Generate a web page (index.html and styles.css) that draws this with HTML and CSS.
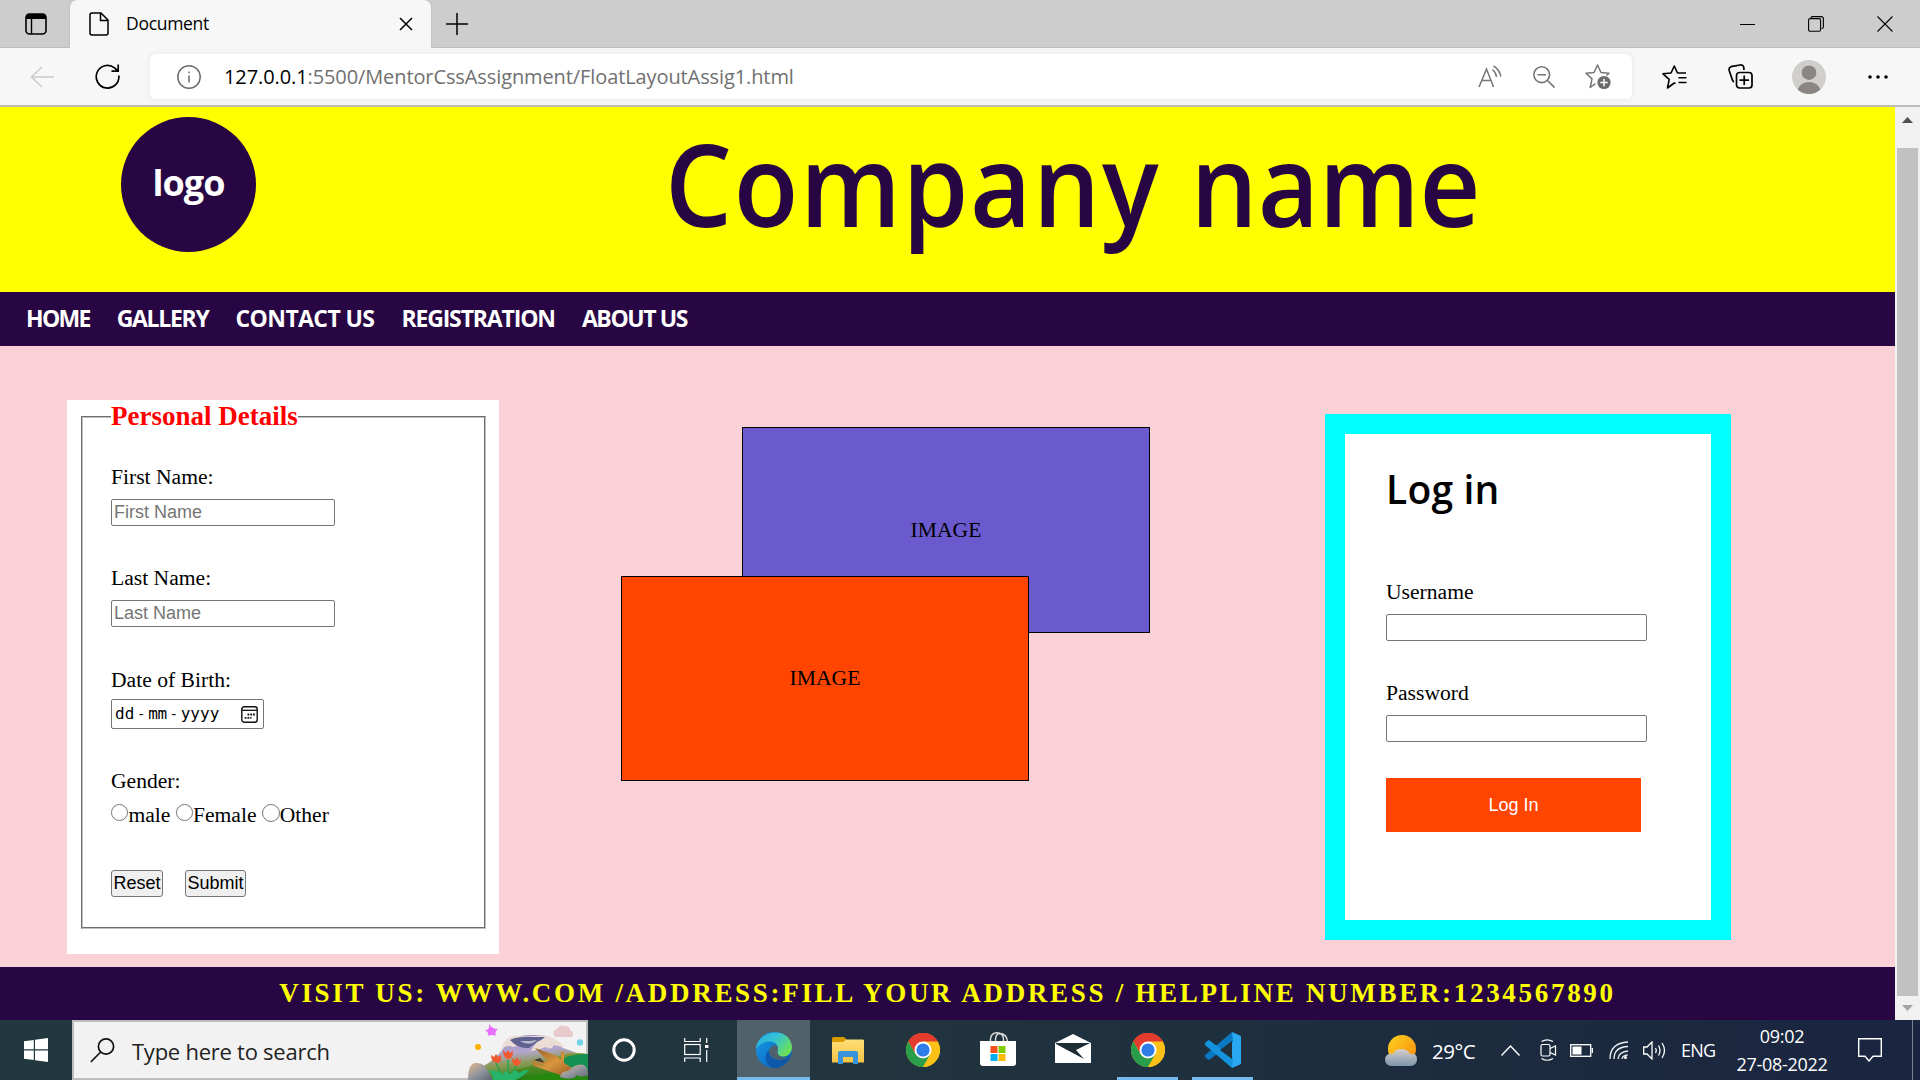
FILE: index.html
```html
<!DOCTYPE html>
<html lang="en">
<head>
<meta charset="utf-8">
<title>Document</title>
<link rel="stylesheet" href="styles.css">
</head>
<body>
<svg width="0" height="0" class="defs" aria-hidden="true">
  <defs>
    <linearGradient id="edgeBlue" x1="0" y1="0" x2="1" y2="1"><stop offset="0" stop-color="#1b9de2"/><stop offset=".5" stop-color="#0f7ad0"/><stop offset="1" stop-color="#0c4f9e"/></linearGradient>
    <linearGradient id="edgeGreen" x1="0" y1="0" x2="1" y2=".6"><stop offset="0" stop-color="#2aa9e0"/><stop offset=".5" stop-color="#33c3d4"/><stop offset="1" stop-color="#6be05a"/></linearGradient>
    <linearGradient id="sun" x1="0" y1="0" x2="1" y2="1"><stop offset="0" stop-color="#ffd21e"/><stop offset="1" stop-color="#f68a0c"/></linearGradient>
    <linearGradient id="cloud" x1="0" y1="0" x2="0" y2="1"><stop offset="0" stop-color="#d9cfc8"/><stop offset="1" stop-color="#7b95ac"/></linearGradient>
    <linearGradient id="folder" x1="0" y1="0" x2="0" y2="1"><stop offset="0" stop-color="#ffde79"/><stop offset="1" stop-color="#f8c344"/></linearGradient>
    <linearGradient id="hill" x1="0" y1="0" x2=".25" y2="1"><stop offset="0" stop-color="#8d86ae"/><stop offset=".45" stop-color="#b3a6cf"/><stop offset=".7" stop-color="#8a9a55"/><stop offset="1" stop-color="#2f8a1c"/></linearGradient>
    <linearGradient id="grass" x1="0" y1="0" x2="0" y2="1"><stop offset="0" stop-color="#8b9a3c"/><stop offset="1" stop-color="#1f7d12"/></linearGradient>
    <linearGradient id="log" x1="0" y1="0" x2="1" y2="1"><stop offset="0" stop-color="#8f5a22"/><stop offset=".5" stop-color="#d9963f"/><stop offset="1" stop-color="#8a531c"/></linearGradient>
    <linearGradient id="rock" x1="0" y1="0" x2="1" y2="1"><stop offset="0" stop-color="#e6b98a"/><stop offset=".5" stop-color="#94979f"/><stop offset="1" stop-color="#5d6470"/></linearGradient>
    <symbol id="chrome" viewBox="0 0 34 34">
      <circle cx="17" cy="17" r="17" fill="#fbc116"/>
      <path d="M17 17L2.3 8.5A17 17 0 0 1 31.7 8.5z" fill="#e33b2e"/>
      <path d="M17 8.5H31.7A17 17 0 0 0 2.3 8.5L9.6 21.2z" fill="#e33b2e"/>
      <path d="M2.3 8.5A17 17 0 0 0 17 34L24.4 21.2L9.6 21.2z" fill="#2a9d4a"/>
      <path d="M31.7 8.5H17L24.4 21.2L17 34A17 17 0 0 0 31.7 8.5z" fill="#fbc116"/>
      <circle cx="17" cy="17" r="8.5" fill="#fff"/><circle cx="17" cy="17" r="6.6" fill="#2f7de9"/>
    </symbol>
  </defs>
</svg>

<div class="tabstrip">
  <div class="tab-actions">
    <svg width="22" height="22" viewBox="0 0 22 22"><rect x="1" y="1" width="20" height="20" rx="3.5" fill="none" stroke="#000" stroke-width="1.6"/><path d="M1 6V4Q1 1 4 1H18Q21 1 21 4V6z"/><path d="M6.5 5V21" stroke="#000" stroke-width="1.4"/></svg>
  </div>
  <div class="tab">
    <svg width="20" height="24" viewBox="0 0 20 24" fill="none" stroke="#000" stroke-width="1.5"><path d="M1 3Q1 1 3 1H12L19 8V21Q19 23 17 23H3Q1 23 1 21zM11.500 1V8.500H19"/></svg>
    <span class="tab-title">Document</span>
    <svg class="tab-close" width="14" height="14" viewBox="0 0 14 14" stroke="#000" stroke-width="1.5"><path d="M1 1L13 13M13 1L1 13"/></svg>
  </div>
  <svg class="new-tab" width="22" height="22" viewBox="0 0 22 22" stroke="#000" stroke-width="1.5"><path d="M11 0V22M0 11H22"/></svg>
  <div class="window-buttons">
    <svg width="15" height="16" viewBox="0 0 15 16"><path d="M0 8.500H15" stroke="#000"/></svg>
    <svg width="16" height="16" viewBox="0 0 16 16" fill="none" stroke="#000" stroke-width="1.100"><rect x=".6" y="2.600" width="12" height="12.600" rx="1.500"/><path d="M3 2.500V2Q3 .6 4.500 .6H13Q15.400 .6 15.400 3V11Q15.400 12.500 13.500 12.500"/></svg>
    <svg width="16" height="16" viewBox="0 0 16 16" stroke="#000" stroke-width="1.100"><path d="M.5 .5L15.500 15.500M15.500 .5L.5 15.500"/></svg>
  </div>
</div>

<div class="toolbar">
  <svg class="back" width="24" height="22" viewBox="0 0 24 22" fill="none" stroke="#cbcbcb" stroke-width="1.500"><path d="M24 11H1M12 1L1.500 11L12 21"/></svg>
  <svg class="reload" width="25" height="25" viewBox="0 0 25 25" fill="none" stroke="#000" stroke-width="1.700"><path d="M23.800 11.500A11.300 11.300 0 1 1 19.500 3.800L23 7M23.200 .5V7.200H16.500"/></svg>
  <div class="address">
    <svg width="24" height="24" viewBox="0 0 24 24" fill="none" stroke="#6b6b6b" stroke-width="1.500"><circle cx="12" cy="12" r="11.200"/><path d="M12 10.500V17.500M12 6.500V8.300"/></svg>
    <span class="url"><b>127.0.0.1</b>:5500/MentorCssAssignment/FloatLayoutAssig1.html</span>
    <svg class="read" width="24" height="24" viewBox="0 0 24 24" fill="none" stroke="#767676" stroke-width="1.500"><path d="M1 22L8.500 4L15.500 22M3.700 15.500H13M14.500 4.500Q18 7.500 18.500 12M15.500 1Q21.500 4.500 22.800 11.500"/></svg>
    <svg class="zoom-out" width="22" height="22" viewBox="0 0 22 22" fill="none" stroke="#767676" stroke-width="1.600"><circle cx="8.700" cy="8.700" r="7.900"/><path d="M4.500 8.700H13M14.300 14.300L21.500 21.500"/></svg>
    <svg class="fav" width="26" height="26" viewBox="0 0 26 26"><path d="M10.500 19.700L5.200 23.500L7 14.900L1 9.300L9 8.500L12.500 1L16 8.500L24 9.300L21.500 11.500" fill="none" stroke="#767676" stroke-width="1.500" stroke-linejoin="round"/><circle cx="19" cy="18.500" r="6.600" fill="#6b6b6b"/><path d="M19 14.800V22.200M15.300 18.500H22.700" stroke="#fff" stroke-width="1.500"/></svg>
  </div>
  <svg class="favorites" width="25" height="24" viewBox="0 0 25 24" fill="none" stroke="#000" stroke-width="1.600" stroke-linejoin="round"><path d="M13.500 18.500L12.300 18L5.500 23L7.200 14.300L1 8.800L9 8L12.300 1L15.500 8H24M16.500 12.800H24.500M16.500 17.500H24.500"/></svg>
  <svg class="collections" width="25" height="25" viewBox="0 0 25 25" fill="none" stroke="#000" stroke-width="1.700"><path d="M6 18Q4.500 17 4.100 15L1.200 6.500Q.5 3.500 3 2.700L12 1Q15 .5 15.700 3L16 6"/><rect x="8.500" y="8.500" width="15.500" height="15.500" rx="3"/><path d="M16.200 11.500V21M11.500 16.200H21"/></svg>
  <svg class="avatar" width="34" height="34" viewBox="0 0 34 34"><clipPath id="av"><circle cx="17" cy="17" r="17"/></clipPath><g clip-path="url(#av)"><rect width="34" height="34" fill="#d0cfcc"/><circle cx="17" cy="12.700" r="7.300" fill="#8b8683"/><path d="M5 34C5 18 29 18 29 34z" fill="#8b8683"/></g></svg>
  <svg class="more" width="20" height="4" viewBox="0 0 20 4"><circle cx="2" cy="2" r="1.800"/><circle cx="10" cy="2" r="1.800"/><circle cx="18" cy="2" r="1.800"/></svg>
</div>

<div class="viewport">
  <div class="page">
    <header class="header">
      <div class="logo">logo</div>
      <h1 class="company"><span>Company</span><span class="second">name</span></h1>
    </header>
    <nav class="nav">
      <a class="n1">HOME</a><a class="n2">GALLERY</a><a class="n3">CONTACT US</a><a class="n4">REGISTRATION</a><a class="n5">ABOUT US</a>
    </nav>
    <main class="main">
      <form class="details">
        <fieldset class="fields">
          <legend>Personal Details</legend>
          <div class="row"><label>First Name:</label><input class="text" placeholder="First Name"></div>
          <div class="row"><label>Last Name:</label><input class="text" placeholder="Last Name"></div>
          <div class="row dob"><label>Date of Birth:</label>
            <div class="date"><span>dd</span><i>-</i><span class="mm">mm</span><i>-</i><span>yyyy</span>
              <svg width="17" height="17" viewBox="0 0 17 17"><rect x=".8" y=".8" width="15.400" height="15.400" rx="2.500" fill="none" stroke="#111" stroke-width="1.400"/><path d="M1 4.300H16" stroke="#111" stroke-width="1.300"/><path d="M6.500 8.500H14M3.700 11.800H10.500" stroke="#111" stroke-width="1.800" stroke-dasharray="1.800 1"/></svg>
            </div>
          </div>
          <div class="row"><label>Gender:</label>
            <div class="radios"><i class="radio"></i><span class="r1">male</span><i class="radio"></i><span class="r2">Female</span><i class="radio big"></i><span>Other</span></div>
          </div>
          <div class="buttons"><button type="button" class="reset">Reset</button><button type="button" class="submit">Submit</button></div>
        </fieldset>
      </form>
      <div class="images">
        <div class="image back-image">IMAGE</div>
        <div class="image front-image">IMAGE</div>
      </div>
      <form class="login">
        <h2>Log in</h2>
        <div class="row"><label>Username</label><input class="text"></div>
        <div class="row"><label>Password</label><input class="text"></div>
        <button type="button" class="login-button">Log In</button>
      </form>
    </main>
    <footer class="footer">VISIT US: WWW.COM /ADDRESS:FILL YOUR ADDRESS / HELPLINE NUMBER:1234567890</footer>
  </div>
  <div class="scrollbar">
    <svg width="11" height="6" viewBox="0 0 11 6"><path d="M0 6L5.500 0L11 6z" fill="#505050"/></svg>
    <div class="thumb"></div>
    <svg width="11" height="6" viewBox="0 0 11 6"><path d="M0 0L5.500 6L11 0z" fill="#a3a3a3"/></svg>
  </div>
</div>

<div class="taskbar">
  <div class="start"><svg width="24" height="24" viewBox="0 0 24 24" fill="#fff"><path d="M0 3.300L9.800 2V11.300H0zM11 1.800L24 0V11.300H11zM0 12.500H9.800V22L0 20.700zM11 12.500H24V24L11 22.200z"/></svg></div>
  <div class="search">
    <svg class="glass" width="25" height="25" viewBox="0 0 25 25" fill="none" stroke="#111" stroke-width="1.700"><circle cx="16" cy="8.500" r="7.600"/><path d="M10.700 14L.8 24"/></svg>
    <span>Type here to search</span>
    <svg class="art" width="120" height="60" viewBox="0 0 120 60">
      <path d="M0 60Q14 46 22 42Q34 32 38 24Q42 15 52 16Q66 14 79 16Q88 22 95 28L120 37V60z" fill="url(#hill)"/>
      <path d="M33 29Q37 17 46 15.500Q57 17 67 16Q77 14 83 17Q93 22 97 27Q88 26 86 25Q83 31 78 27Q70 30 63 31Q66 25 69 22L57 20L48 22Q51 27 45 27Q40 24 33 29z" fill="#ecdcd6"/>
      <path d="M42 20Q47 17 57 17L77 17Q74 20 69 22L61 28Q50 29 42 20z" fill="#5f628e"/><path d="M52 21Q62 27 69 20L62 21z" fill="#b9b9c9"/>
      <path d="M20 60Q55 46 77 43Q97 30 120 34V60z" fill="url(#grass)"/>
      <path d="M88 43Q101 33 120 34V51L94 51z" fill="#129152"/><path d="M53 60Q87 48 120 55V60z" fill="#26870f"/>
      <path d="M67 28L89 36L93 40V34Q92 31 96 31V43L111 52Q104 57 95 56L66 46L63 40L78 47L65 39L80 41z" fill="url(#log)"/><path d="M66 40L77 43L72 38z" fill="#3b3c36"/>
      <path d="M0 60Q0 44 7 43Q15 42 19 49L25 60z" fill="url(#rock)"/>
      <path d="M92 57Q93 51 100 51Q108 43 116 45Q120 47 120 55Q113 58 109 55Q106 60 96 58z" fill="url(#rock)"/>
      <path d="M28 43L33 54M40 40V58M48 46L43 57" stroke="#26a650" stroke-width="1.500" fill="none"/>
      <path d="M20 51Q30 49 35 55Q37 48 42 54Q47 48 51 53Q58 49 61 50Q55 57 47 60H24Q27 55 20 51z" fill="#25b46a"/>
      <path d="M23 35L26 37L28 34L30 37L33 35Q34 43 29 43Q23 42 23 35zM35 30L38 33L40 30L42 33L45 31Q45 39 40 39Q35 38 35 30zM44 38L47 40L49 37L51 41L53 39Q53 46 48 46Q44 45 44 38z" fill="#f15a31"/>
      <path d="M21 4Q24 9 30 9Q26 12 28 16Q23 14 20 16Q21 12 17 10Q22 10 21 4z" fill="#e86fff"/>
      <circle cx="10" cy="27" r="3" fill="#ffb000"/><circle cx="112" cy="22.500" r="3.200" fill="#72d3e8"/>
      <path d="M87 17Q83 11 89 9Q92 4 97 6Q102 6 102 10Q107 12 104 17z" fill="#e9c9cc"/>
    </svg>
  </div>
  <div class="cell cortana"><svg width="24" height="24" viewBox="0 0 24 24"><circle cx="12" cy="12" r="10.200" fill="none" stroke="#fff" stroke-width="3"/></svg></div>
  <div class="cell taskview"><svg width="25" height="24" viewBox="0 0 25 24" fill="none" stroke="#fff" stroke-width="1.200"><rect x=".7" y="6.500" width="15.500" height="10"/><path d="M.7 0V3.500H16.200V0M.7 24V20H16.200V24M22.700 0V5M22.700 12V24"/><rect x="21" y="7" width="3.400" height="3" fill="#fff" stroke="none"/></svg></div>
  <div class="cell app active"><svg width="36" height="36" viewBox="0 0 36 36"><circle cx="18" cy="18" r="18" fill="url(#edgeBlue)"/><path d="M0 17C1-2 34-7 36 15C36 23 29 26 24 24Q20 22 22 18C23 7 6 7 0 17z" fill="url(#edgeGreen)"/><path d="M13 18Q15 14 18.500 13C25 15 20 19 22 22Q26 28 34 24.500C27 30 13 29 13 18z" fill="#4f616b"/><path d="M13 18C12 29 26 31 34 24.500Q28 35 19 36C9 34 7 23 13 18z" fill="#0d58a8"/></svg></div>
  <div class="cell app"><svg width="32" height="27" viewBox="0 0 32 27"><path d="M0 1.500Q0 0 1.500 0H12L15 3V8H0z" fill="#d99a00"/><path d="M0 5H11L14 2.500H31Q32 2.500 32 4V25.500H0z" fill="url(#folder)"/><path d="M6 27V16Q6 14 8 14H24Q26 14 26 16V27H21V20H11V27z" fill="#3793dd"/></svg></div>
  <div class="cell app"><svg width="34" height="34"><use href="#chrome"/></svg></div>
  <div class="cell app store"><svg width="36" height="35" viewBox="0 0 36 35"><path d="M10.500 10V7Q11 .7 17 .7Q23 .7 23.500 7V10M15.500 10V7Q16 1.500 20 1.500Q27 2 27.500 10" fill="none" stroke="#ddd" stroke-width="1.400"/><path d="M0 9H36V31Q36 34 33 34H3Q0 34 0 31z" fill="#fff"/><path d="M10.500 14H17.500V21H10.500z" fill="#f1511b"/><path d="M18.500 14H25.500V21H18.500z" fill="#80cc00"/><path d="M10.500 22H17.500V29H10.500z" fill="#00adef"/><path d="M18.500 22H25.500V29H18.500z" fill="#fbbc09"/></svg></div>
  <div class="cell app mail"><svg width="36" height="30" viewBox="0 0 36 30"><path d="M0 9L18 0L36 9V29H0z" fill="#fff"/><path d="M1 9H35L21 16L29 25L1 10z" fill="#1d2c34"/></svg></div>
  <div class="cell app running"><svg width="34" height="34"><use href="#chrome"/></svg></div>
  <div class="cell app running"><svg width="36" height="36" viewBox="0 0 36 36"><path d="M27 0L36 4V32L27 36z" fill="#2aa9f3"/><path d="M27 0L28 10L4 28Q3 28 0 25V23z" fill="#0a78c2"/><path d="M27 36L28 26L4 8Q3 8 0 11V13z" fill="#1592de"/><path d="M27 9V27L15 18z" fill="#1f2f3b"/></svg></div>
  <div class="tray">
    <svg class="weather" width="32" height="31" viewBox="0 0 32 31"><circle cx="17" cy="14" r="14" fill="url(#sun)"/><path d="M6 31Q0 30 0 24Q1 18 8 19Q10 14 16 14Q23 14 25 19Q32 18 32 24Q32 30 26 31z" fill="url(#cloud)"/></svg>
    <span class="temp">29°C</span>
    <svg class="chev" width="19" height="11" viewBox="0 0 19 11" fill="none" stroke="#fff" stroke-width="1.400"><path d="M.5 10.500L9.500 1L18.500 10.500"/></svg>
    <svg class="cam" width="17" height="22" viewBox="0 0 17 22" fill="none" stroke="#fff" stroke-width="1.200"><rect x="1" y="5.500" width="9" height="11.500" rx="1.500"/><path d="M10 9.500L15.500 7V16L10 13.500M1.500 2.500Q7 -.8 13 2.500M1.500 19.500Q7 23 13 19.500"/></svg>
    <svg class="battery" width="23" height="13" viewBox="0 0 23 13" fill="none" stroke="#fff" stroke-width="1.300"><rect x=".7" y=".7" width="20" height="11.600"/><path d="M22.300 4V9"/><rect x="2.500" y="2.500" width="9" height="8" fill="#fff" stroke="none"/></svg>
    <svg class="wifi" width="20" height="19" viewBox="0 0 20 19" fill="none" stroke="#e8edf0" stroke-width="1.300"><path d="M1 18Q1 2 19 1M5 18Q5 6 19 5.500M9 18Q9.500 11 19 10M13 18Q13.500 14.500 18.500 14"/><circle cx="16.500" cy="16.500" r="1.500" fill="#fff" stroke="none"/></svg>
    <svg class="sound" width="23" height="19" viewBox="0 0 23 19" fill="none" stroke="#fff" stroke-width="1.300"><path d="M.7 6H4L9 1V18L4 13H.7zM12.500 7Q14 9.500 12.500 12M15.500 4.500Q18.500 9.500 15.500 14.500M19 2Q24 9.500 19 17"/></svg>
    <span class="lang">ENG</span>
    <div class="clock"><span>09:02</span><span class="day">27-08-2022</span></div>
    <svg class="note" width="24" height="24" viewBox="0 0 24 24" fill="none" stroke="#fff" stroke-width="1.400"><path d="M.7 .7H23.300V18.300H15L11 23L7 18.300H.7z"/></svg>
    <div class="peek"></div>
  </div>
</div>
</body>
</html>
```
FILE: styles.css
```css
* { box-sizing: border-box; }
body { margin: 0; width: 1920px; height: 1080px; overflow: hidden; font-family: "Liberation Serif", "Times New Roman", serif; font-size: 21.6px; color: #000; display: flex; flex-direction: column; }
svg { display: block; flex: none; }
.defs { position: absolute; }
i { font-style: normal; }

/* browser tabs */
.tabstrip { height: 48px; flex: none; background: #cdcdcd; display: flex; align-items: center; box-shadow: inset 0 -1px #bdbdbd; font-family: "Open Sans", sans-serif; }
.tab-actions { width: 70px; padding-left: 25px; }
.tab { width: 361px; height: 48px; background: #f7f7f7; border-radius: 7px 7px 0 0; display: flex; align-items: center; padding: 0 18px 0 19px; box-shadow: 0 0 2px #aaa; }
.tab-title { margin-left: 17px; font-size: 17.5px; line-height: 46px; letter-spacing: -.3px; padding-bottom: 2px; }
.tab-close { margin-left: auto; }
.new-tab { margin-left: 15px; }
.window-buttons { margin-left: auto; margin-right: 27px; display: flex; gap: 53px; }

/* address row */
.toolbar { height: 59px; flex: none; background: #f7f7f7; border-bottom: 2px solid #bcbcbc; display: flex; align-items: center; font-family: "Open Sans", sans-serif; }
.back { margin-left: 30px; }
.reload { margin-left: 41px; }
.address { margin-left: 30px; width: 1482px; height: 45px; border-radius: 6px; background: #fff; box-shadow: 0 0 6px #e6e6e6; display: flex; align-items: center; padding-left: 27px; }
.url { margin-left: 23px; width: 600px; font-size: 20px; letter-spacing: -.1px; color: #707070; white-space: nowrap; }
.url b { font-weight: 400; color: #000; }
.read { margin-left: 654px; }
.zoom-out { margin-left: 31px; }
.fav { margin-left: 30px; }
.favorites { margin-left: 30px; }
.collections { margin-left: 41px; }
.avatar { margin-left: 39px; }
.more { margin-left: 42px; }

/* web page */
.viewport { height: 913px; flex: none; display: flex; }
.page { width: 1895px; display: flex; flex-direction: column; }
.header { height: 185px; background: #ff0; display: flex; align-items: flex-start; color: #280644; font-family: "Open Sans", sans-serif; }
.logo { margin: 10px 0 0 121px; width: 135px; height: 135px; border-radius: 50%; background: #280644; color: #fff; font-size: 36px; font-weight: 700; line-height: 131px; text-align: center; letter-spacing: -1px; }
.company { display: flex; margin: 0 0 0 409px; font-size: 115px; font-weight: 600; line-height: 152px; white-space: nowrap; letter-spacing: 1.8px; transform: scaleX(.92); transform-origin: 0 0; }
.company .second { margin-left: 33px; letter-spacing: -.2px; }
.nav { height: 54px; background: #280644; display: flex; align-items: center; gap: 27px; padding: 0 0 2px 26px; color: #fff; font: 700 23px/50px "Open Sans", sans-serif; }
.nav a { white-space: nowrap; }
.n1 { letter-spacing: -1.7px; }
.n2 { letter-spacing: -1.3px; }
.n3 { letter-spacing: -.6px; }
.n4 { letter-spacing: -1.15px; }
.n5 { letter-spacing: -1.4px; }
.main { height: 621px; background: #fad1d6; display: flex; align-items: flex-start; }
.details { margin: 54px 0 0 67px; width: 432px; height: 554px; background: #fff; padding: 1px 13px 0 14px; }
.fields { margin: 0; width: 405px; height: 528px; border: 2px groove #c0c0c0; padding: 33px 0 0 28px; }
legend { padding: 0; font-size: 27px; font-weight: 700; line-height: 31px; color: #f00; }
.row { height: 101.25px; display: flex; flex-direction: column; align-items: flex-start; gap: 10px; }
.row label { line-height: 24px; }
.text { width: 224px; height: 27px; border: 1px solid #767676; border-radius: 2px; padding: 0 2px; font: 18px "Liberation Sans", Arial, sans-serif; background: #fff; }
.text::placeholder { color: #757575; }
.dob { gap: 7.5px; }
.date { width: 153px; height: 30px; border: 1px solid #767676; border-radius: 2px; display: flex; align-items: center; padding-left: 3px; font: 16px/28px "DejaVu Sans Mono", monospace; }
.date i { width: 14px; text-align: center; font-size: 14px; }
.date .mm { letter-spacing: -.4px; }
.date svg { margin-left: auto; margin-right: 5px; }
.radios { display: flex; line-height: 24px; }
.radio { width: 17px; height: 17px; margin: 1.5px .4px 0 0; border: 1px solid #767676; border-radius: 50%; }
.radio.big { width: 18px; height: 18px; margin-right: 0; margin-top: 1px; }
.r1, .r2 { margin-right: 5.2px; }
.buttons { display: flex; gap: 22px; }
.reset, .submit { height: 27px; padding: 0 0 2px; border: 1px solid #767676; border-radius: 3px; background: #efefef; font: 18px/22px "Liberation Sans", Arial, sans-serif; color: #000; }
.reset { width: 52px; }
.submit { width: 61px; }

.images { position: relative; margin: 81px 0 0 122px; width: 529px; height: 354px; }
.image { position: absolute; width: 408px; border: 1px solid #000; text-align: center; line-height: 204px; }
.back-image { left: 121px; top: 0; height: 206px; background: #6a5acd; }
.front-image { left: 0; top: 149px; height: 205px; background: #ff4500; line-height: 202px; }

.login { margin: 68px 0 0 175px; width: 406px; height: 526px; border: 20px solid #0ff; background: #fff; padding: 32px 0 0 41px; }
.login h2 { margin: 0 0 87px; font: 600 39px/45px "Open Sans", sans-serif; height: 27px; letter-spacing: .2px; }
.login .row { height: 101px; }
.login .text { width: 261px; }
.login-button { display: block; width: 255px; height: 54px; margin-top: -4px; padding: 0; border: 0; background: #ff4500; color: #fff; font: 18px/54px "Liberation Sans", Arial, sans-serif; }
.footer { height: 53px; background: #280644; color: #ff0; font-size: 27px; font-weight: 700; letter-spacing: 2.7px; text-align: center; line-height: 52px; white-space: nowrap; }

.scrollbar { width: 25px; background: #f1f1f1; display: flex; flex-direction: column; align-items: center; padding: 10px 0 9px; }
.thumb { width: 21px; height: 848px; margin: 25px 0 9px; background: #c1c1c1; }

/* desktop taskbar */
.taskbar { height: 60px; flex: none; display: flex; background: linear-gradient(90deg, #22383f 0, #21343e 45%, #1c2b3e 78%, #1a2541 100%); color: #fff; font-family: "Open Sans", sans-serif; }
.start { width: 72px; display: flex; align-items: center; padding-left: 24px; }
.search { width: 516px; background: #f2f2f2; border: 2px solid #bdbdbd; display: flex; align-items: center; padding-left: 16px; color: #222; font-size: 22px; }
.search span { margin-left: 17px; line-height: 60px; padding-top: 1px; letter-spacing: -.25px; white-space: nowrap; }
.search .art { margin: 0 -2px 0 auto; }
.cell { width: 75px; display: flex; align-items: center; justify-content: center; }
.cortana { width: 72px; }
.taskview { width: 77px; padding-right: 5px; }
.app { border-bottom: 3px solid transparent; padding-top: 3px; }
.active { width: 73px; background: #50616a; border-color: #76b9ed; }
.running { width: 61px; margin: 0 7px; border-color: #76b9ed; }
.store svg, .mail svg { margin-top: -2px; }
.tray { flex: 1; display: flex; align-items: center; }
.weather { margin-left: 125px; }
.temp { margin-left: 15px; width: 55px; font-size: 20.5px; letter-spacing: -.5px; padding-top: 2px; white-space: nowrap; }
.chev { margin-left: 14px; }
.cam { margin-left: 20px; }
.battery { margin-left: 13px; margin-top: 1px; }
.wifi { margin-left: 16px; margin-top: 1px; }
.sound { margin-left: 14px; }
.lang { margin-left: 15px; width: 36px; font-size: 18px; letter-spacing: -.8px; }
.clock { width: 112px; margin-left: 9px; display: flex; flex-direction: column; align-items: center; font-size: 18px; line-height: 28px; letter-spacing: -.3px; padding-bottom: 1px; }
.note { margin-left: 20px; }
.peek { margin-left: 30px; width: 1px; height: 60px; background: #78808e; }
```
